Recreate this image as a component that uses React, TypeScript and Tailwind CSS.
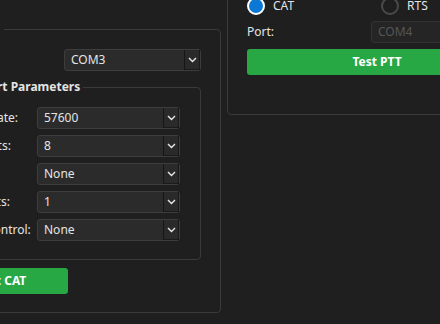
import { ReactNode } from 'react'

function Chevron() {
  return (
    <svg width="9" height="6" viewBox="0 0 9 6" fill="none" stroke="#e8e8e8" strokeWidth="1.4">
      <path d="M1 1l3.5 3.5L8 1" />
    </svg>
  )
}

function Combo({ value, disabled = false, className = '' }: { value: string; disabled?: boolean; className?: string }) {
  if (disabled) {
    return (
      <div className={`flex h-[22px] items-center rounded-[3px] border border-[#333333] bg-[#252525] pl-[6px] text-[#555555] ${className}`}>
        {value}
      </div>
    )
  }
  return (
    <div className={`flex h-[22px] items-stretch rounded-[3px] border border-[#3d3d3d] bg-[#2b2b2b] ${className}`}>
      <span className="flex flex-1 items-center pl-[6px]">{value}</span>
      <span className="flex w-[16px] items-center justify-center border-l border-[#161616] bg-[#2a2a2a] shadow-[inset_-1px_-1px_0_#1a1a1a]">
        <Chevron />
      </span>
    </div>
  )
}

function Radio({ label, checked = false }: { label: string; checked?: boolean }) {
  return (
    <div className="flex h-[18px] items-center gap-[8px]">
      {checked ? (
        <span className="h-[18px] w-[18px] rounded-full border-[2px] border-white bg-[#0a78d4]" />
      ) : (
        <span className="h-[18px] w-[18px] rounded-full border-[2px] border-[#4a4a4a] bg-[#1f1f1f]" />
      )}
      <span>{label}</span>
    </div>
  )
}

function ParamRow({ label, value }: { label: string; value: string }) {
  return (
    <>
      <span className="flex h-[22px] items-center whitespace-nowrap">{label}</span>
      <Combo value={value} />
    </>
  )
}

function GreenButton({ children, className = '' }: { children: ReactNode; className?: string }) {
  return (
    <button className={`h-[26px] rounded-[3px] bg-[#28a745] font-bold text-white ${className}`}>
      {children}
    </button>
  )
}

export default function App() {
  return (
    <div className="h-[324px] w-[440px] overflow-hidden bg-[#1f1f1f] font-['Noto_Sans',sans-serif] text-[12px] leading-[16px] text-[#e4e4e4]">
      <div className="ml-[-120px] flex items-start gap-[6px]">
        {/* serial / CAT group */}
        <fieldset className="mt-[21px] w-[341px] shrink-0 rounded-[4px] border border-[#3a3a3a] px-[19px] pb-[18px] pt-[12px]">
          <legend className="w-[104px] overflow-hidden whitespace-nowrap pr-[4px] font-bold">
            <span className="block text-right">CAT Control</span>
          </legend>
          <div className="flex items-center justify-between">
            <span>Port:</span>
            <Combo value="COM3" className="w-[137px]" />
          </div>

          <fieldset className="mt-[8px] rounded-[4px] border border-[#3a3a3a] pb-[18px] pl-[56px] pr-[19px] pt-[12px]">
            <legend className="ml-[22px] px-[3px] font-bold">Port Parameters</legend>
            <div className="grid grid-cols-[80px_143px] gap-y-[6px]">
              <ParamRow label="Baud Rate:" value="57600" />
              <ParamRow label="Data Bits:" value="8" />
              <ParamRow label="Parity:" value="None" />
              <ParamRow label="Stop Bits:" value="1" />
              <ParamRow label="Flow Control:" value="None" />
            </div>
          </fieldset>

          <GreenButton className="ml-[10px] mt-[8px] w-[158px]">Connect CAT</GreenButton>
        </fieldset>

        {/* PTT group */}
        <fieldset className="mt-[-30px] w-[300px] shrink-0 rounded-[4px] border border-[#3a3a3a] px-[19px] pb-[39px] pt-[26px]">
          <div className="grid grid-cols-[134px_1fr]">
            <Radio label="CAT" checked />
            <Radio label="RTS" />
          </div>
          <div className="mt-[6px] grid grid-cols-[124px_1fr] items-center">
            <span>Port:</span>
            <Combo value="COM4" disabled />
          </div>
          <GreenButton className="mt-[6px] w-full">Test PTT</GreenButton>
        </fieldset>
      </div>
    </div>
  )
}
